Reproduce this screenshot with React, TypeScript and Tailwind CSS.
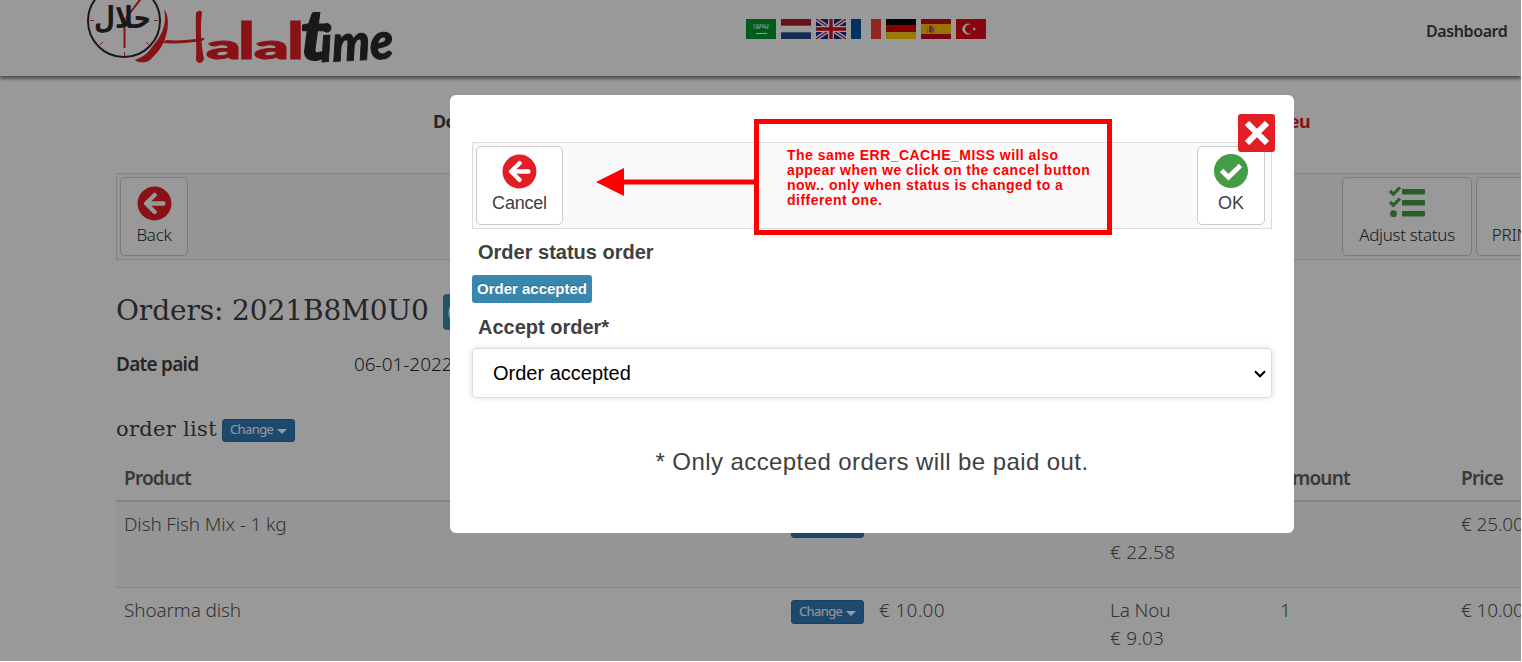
import type { ReactNode } from "react";
import { FaArrowCircleLeft } from "react-icons/fa";

interface OrderLine {
  product: string;
  unit: string;
  supplier: string;
  cost: string;
  amount: string;
  price: string;
}

const LINES: OrderLine[] = [
  { product: "Dish Fish Mix - 1 kg", unit: "€ 25.00", supplier: "La Nou", cost: "€ 22.58", amount: "1", price: "€ 25.00" },
  { product: "Shoarma dish", unit: "€ 10.00", supplier: "La Nou", cost: "€ 9.03", amount: "1", price: "€ 10.00" },
];

const COLUMNS = "grid grid-cols-[667px_88px_231px_170px_181px_150px]";

function Logo() {
  return (
    <svg className="block h-[76px] w-[320px]" viewBox="80 0 320 76">
      <circle cx="124" cy="21" r="36" fill="none" stroke="#2b2b2b" strokeWidth="2" />
      <g stroke="#e31e24" strokeWidth="1">
        <path d="M90 20.500h4M154 20.500h4M124.500 52v4M100 45l3-3M149 45l-3-3" />
        <path d="M124.500 18v30" strokeWidth="2" />
        <path d="M126 18L143-4" strokeWidth="2" />
      </g>
      <text x="94" y="28" fontSize="30" fontWeight="700" textLength="57" lengthAdjust="spacingAndGlyphs" fill="#2b2b2b" className="font-['DejaVu_Sans',sans-serif]">
        حلال
      </text>
      <g fill="#e31e24">
        {/* swashes that make up the oversized initial */}
        <path d="M164 10c5 3 5 19 1 29-2 7-8 14-13 19-3 4-9 6-16 3l-1-1c8-3 13-7 17-13 5-6 8-11 10-15 3-7 4-15 2-22z" />
        <path d="M166 40c11 1 23 0 38-2 1 0 0 2-2 3-13 2-29 3-39 2z" />
        <path d="M196 13c2-3 6-3 6 0-2 15-1 31 2 46-2 5-6 5-8 1 1-15-1-31 0-47z" />
        <g fontWeight="900" stroke="#e31e24" strokeWidth="1" className="font-[Lato,sans-serif]">
          <text x="206" y="59" fontSize="35" textLength="35" lengthAdjust="spacingAndGlyphs">a</text>
          <text x="238" y="59" fontSize="52" textLength="17" lengthAdjust="spacingAndGlyphs">l</text>
          <text x="254" y="59" fontSize="35" textLength="35" lengthAdjust="spacingAndGlyphs">a</text>
          <text x="287" y="59" fontSize="52" textLength="17" lengthAdjust="spacingAndGlyphs">l</text>
        </g>
      </g>
      <g fill="#2b2b2b" stroke="#2b2b2b" strokeWidth="1" fontWeight="900" fontStyle="italic" className="font-[Lato,sans-serif]">
        <text x="300" y="60" fontSize="70" textLength="28" lengthAdjust="spacingAndGlyphs">t</text>
        <text x="321" y="62" fontSize="51" textLength="73" lengthAdjust="spacingAndGlyphs" transform="rotate(-3 321 62)">ime</text>
      </g>
    </svg>
  );
}

function Flags() {
  return (
    <div className="flex gap-[5px]">
      <svg className="h-5 w-[30px]" viewBox="0 0 30 20">
        <path d="M0 0h30v20H0z" fill="#009b2f" />
        <path d="M8 5v3M10 5l1 4M12 5v4h2V5M15 5v3M17 5v4M19 5v4h3V5M8 9h6M16 8h6" stroke="#fff" strokeWidth="1" fill="none" opacity=".75" />
        <path d="M10 14.500h11" stroke="#fff" strokeWidth="1" />
      </svg>
      <svg className="h-5 w-[30px]" viewBox="0 0 30 20">
        <path d="M0 0h30v20H0z" fill="#fff" />
        <path d="M0 0h30v6.700H0z" fill="#ae1c28" />
        <path d="M0 13.300h30V20H0z" fill="#21468b" />
      </svg>
      <svg className="h-5 w-[30px]" viewBox="0 0 30 20">
        <path d="M0 0h30v20H0z" fill="#00349c" />
        <path d="M0 0l30 20M30 0L0 20" stroke="#fff" strokeWidth="4" />
        <path d="M0 0l30 20M30 0L0 20" stroke="#d80027" strokeWidth="1.300" />
        <path d="M15 0v20M0 10h30" stroke="#fff" strokeWidth="6" />
        <path d="M15 0v20M0 10h30" stroke="#d80c1a" strokeWidth="3.400" />
      </svg>
      <svg className="h-5 w-[30px]" viewBox="0 0 30 20">
        <path d="M0 0h30v20H0z" fill="#fff" />
        <path d="M0 0h10v20H0z" fill="#0055a4" />
        <path d="M20 0h10v20H20z" fill="#ef4135" />
      </svg>
      <svg className="h-5 w-[30px]" viewBox="0 0 30 20">
        <path d="M0 0h30v6.700H0z" fill="#000" />
        <path d="M0 6.700h30v6.600H0z" fill="#dd0000" />
        <path d="M0 13.300h30V20H0z" fill="#ffce00" />
      </svg>
      <svg className="h-5 w-[30px]" viewBox="0 0 30 20">
        <path d="M0 0h30v20H0z" fill="#c60b1e" />
        <path d="M0 5h30v10H0z" fill="#ffc400" />
        <path d="M6.500 8v6M13 8v6" stroke="#b98a55" strokeWidth="1" />
        <path d="M8 6.500h3.500V13L10 14l-2-1z" fill="#b5462e" />
        <path d="M10.500 9h2v4h-2z" fill="#8f7c80" />
      </svg>
      <svg className="h-5 w-[30px]" viewBox="0 0 30 20">
        <path d="M0 0h30v20H0z" fill="#e30a17" />
        <path d="M15 5.600a5.400 5.400 0 1 0 0 8.800 4.600 4.600 0 1 1 0-8.800z" fill="#fff" />
        <path d="M20.500 10l-4 1.300 2.400-3.400v4.200l-2.400-3.400z" fill="#fff" />
      </svg>
    </div>
  );
}

function CheckCircle() {
  return (
    <svg className="size-[34px]" viewBox="0 0 34 34">
      <circle cx="17" cy="17" r="17" fill="#449d44" />
      <path d="M7.500 16.500l7 6.700L26.500 11.500" fill="none" stroke="#fff" strokeWidth="4.800" />
    </svg>
  );
}

function TaskList() {
  return (
    <svg className="h-[34px] w-9" viewBox="0 0 36 34" fill="#449d44">
      <path d="M14 3h21q1 0 1 1v3.500q0 1-1 1H14q-1 0-1-1V4q0-1 1-1zM14 14h21q1 0 1 1v3.500q0 1-1 1H14q-1 0-1-1V15q0-1 1-1zM14 25h21q1 0 1 1v3.500q0 1-1 1H14q-1 0-1-1V26q0-1 1-1z" />
      <circle cx="4.500" cy="27.700" r="3.400" />
      <path d="M1 5l3.300 3.300L11 1.500M1 16l3.300 3.300L11 12.500" fill="none" stroke="#449d44" strokeWidth="3.200" />
    </svg>
  );
}

function ToolButton({ icon, label, className }: { icon: ReactNode; label: string; className: string }) {
  return (
    <button className={`flex h-[79px] shrink-0 flex-col items-center rounded-[5px] border border-[#ccc] bg-white pt-2 ${className}`}>
      <span className="flex h-[34px] items-center">{icon}</span>
      <span className="mt-[3px] whitespace-nowrap leading-6">{label}</span>
    </button>
  );
}

function ChangeButton({ className = "" }: { className?: string }) {
  return (
    <button className={`flex w-[73px] items-center rounded-[3px] border border-[#2e6da4] bg-[#337ab7] pb-0.5 pl-[7px] font-['Noto_Sans',sans-serif] text-[13px] font-normal tracking-[-0.6px] text-white ${className}`}>
      Change
      <span className="ml-[4px] mt-[4px] border-x-[5px] border-t-[5px] border-x-transparent border-t-white" />
    </button>
  );
}

function OrdersPage() {
  return (
    <div className="h-full w-full bg-white font-['Noto_Sans',sans-serif] text-[#404040]">
      <header className="relative flex h-[76px] items-start pl-20 shadow-[0_3px_3px_0_rgba(0,0,0,0.45)]">
        <Logo />
        <div className="ml-[346px] mt-[19px]">
          <Flags />
        </div>
        <span className="ml-[440px] mt-[19px] text-[16px] font-semibold leading-6 tracking-[-0.4px]">Dashboard</span>
      </header>

      <div className="ml-[433px] mt-8 flex h-[26px] w-[877px] items-center justify-between text-[18px] font-bold tracking-[-0.6px]">
        <span>Do</span>
        <span className="text-[#e31e24]">eu</span>
      </div>

      <div className="ml-[116px] mt-[39px] flex h-[87px] w-[1430px] border border-[#ddd] bg-[#fafafa] p-[3px] text-[17px] font-light tracking-[-0.3px] text-[#2b2b2b]">
        <ToolButton className="w-[68px]" icon={<FaArrowCircleLeft size={35} color="#e31e24" />} label="Back" />
        <ToolButton className="ml-[1154px] w-[130px]" icon={<TaskList />} label="Adjust status" />
        <ToolButton className="ml-1 w-[77px]" icon={null} label="PRINT" />
      </div>

      <div className="ml-[116px] mt-[34px] flex h-9 items-center">
        <h1 className="w-[327px] whitespace-nowrap pb-0.5 font-['DejaVu_Serif',serif] text-[28px] font-light tracking-[-0.1px]">Orders: 2021B8M0U0</h1>
        <span className="h-9 w-[120px] rounded bg-[#3a87ad] pl-1 text-[26px] font-bold leading-9 text-white">O</span>
      </div>

      <div className="ml-[116px] mt-5 flex h-7 items-center text-[19px]">
        <span className="w-[238px] font-semibold tracking-[-0.75px]">Date paid</span>
        <span className="font-light tracking-[-0.05px] text-[#2b2b2b]">06-01-2022</span>
      </div>

      <div className="ml-[116px] mt-[38px] flex h-7 items-center">
        <h2 className="w-[106px] whitespace-nowrap pb-px font-['DejaVu_Serif',serif] text-[21px] font-light tracking-[0.3px]">order list</h2>
        <ChangeButton className="mt-px h-[23px]" />
      </div>

      <div className="ml-[116px] mt-3 w-[1487px] text-[19px] leading-7 tracking-[-0.15px] text-[#555]">
        <div className={`${COLUMNS} h-[46px] border-b-2 border-[#ddd] pt-2 font-semibold tracking-[-0.8px] text-[#606060]`}>
          <span className="pl-2">Product</span>
          <span />
          <span />
          <span />
          <span className="pl-2">Amount</span>
          <span className="pl-2">Price</span>
        </div>
        {LINES.map((line, i) => (
          <div key={line.product} className={`${COLUMNS} h-[86px] border-b border-[#ddd] pt-2 font-light ${i % 2 === 0 ? "bg-[#f9f9f9]" : ""}`}>
            <span className="pl-2">{line.product}</span>
            <span className="pl-2 pt-1">
              <ChangeButton className="h-6" />
            </span>
            <span className="pl-2 tracking-[0.3px]">{line.unit}</span>
            <span className="pl-2">
              {line.supplier}
              <br />
              <span className="tracking-[0.2px]">{line.cost}</span>
            </span>
            <span className="pl-2">{line.amount}</span>
            <span className="pl-2">{line.price}</span>
          </div>
        ))}
      </div>
    </div>
  );
}

function StatusDialog() {
  return (
    <div className="absolute left-[450px] top-[95px] h-[438px] w-[844px] rounded-md bg-white px-[22px] pt-[47px] font-['Liberation_Sans',Arial,sans-serif] text-[#404040]">
      <div className="flex h-[87px] justify-between border border-[#ddd] bg-[#fafafa] py-[3px] pl-[3px] pr-[6px] text-[18px]">
        <ToolButton className="w-[87px] pt-[7px]! tracking-[-0.2px]" icon={<FaArrowCircleLeft size={35} color="#e31e24" />} label="Cancel" />
        <ToolButton className="w-[68px] pt-[7px]!" icon={<CheckCircle />} label="OK" />
      </div>
      <p className="ml-1.5 mt-[9px] text-[20px] font-bold leading-7">Order status order</p>
      <span className="mt-[9px] flex h-7 w-[120px] items-center justify-center whitespace-nowrap rounded-[3px] bg-[#3a87ad] text-[15px] font-bold text-white [text-shadow:0_-1px_0_rgba(0,0,0,0.25)]">
        Order accepted
      </span>
      <p className="ml-1.5 mt-[10px] text-[20px] font-bold leading-7">Accept order*</p>
      <div className="mt-[7px] flex h-[50px] items-center justify-between rounded-[5px] border border-[#ddd] bg-white pl-5 pr-[5px] text-[20px] text-black shadow-[0_0_6px_rgba(0,0,0,0.15)]">
        <span>Order accepted</span>
        <svg className="mt-px h-2 w-3" viewBox="0 0 12 8" fill="none" stroke="#000" strokeWidth="2">
          <path d="M1 1.300l5 5 5-5" />
        </svg>
      </div>
      <p className="mt-[46px] text-center text-[24px] leading-9 tracking-[0.42px]">* Only accepted orders will be paid out.</p>

      <button className="absolute left-[788px] top-[19px] flex h-[38px] w-[37px] items-center justify-center rounded-[3px] bg-[#e31e24]" aria-label="Close">
        <svg className="size-6" viewBox="0 0 24 24" stroke="#fff" strokeWidth="6">
          <path d="M2 2l20 20M22 2L2 22" />
        </svg>
      </button>
    </div>
  );
}

function Note() {
  return (
    <div className="absolute left-[596px] top-[119px] flex h-[116px] w-[516px] items-start">
      <svg className="mt-[49px] h-7 w-[158px] shrink-0" viewBox="0 0 158 28" fill="#f00">
        <path d="M0 14L28 0v28zM27 11.500h131v5H27z" />
      </svg>
      <p className="h-[116px] w-[358px] whitespace-nowrap border-[5px] border-[#f00] pl-7 pt-6 font-['Liberation_Sans',Arial,sans-serif] text-[14px] font-bold leading-[15px] tracking-[0.47px] text-[#f00]">
        The same ERR_CACHE_MISS will also
        <br />
        appear when we click on the cancel button
        <br />
        now.. only when status is changed to a
        <br />
        different one.
      </p>
    </div>
  );
}

export default function App() {
  return (
    <div className="h-[662px] w-[1522px] overflow-hidden bg-white">
      <div className="relative h-[661px] w-[1521px] overflow-hidden">
        <OrdersPage />
        <div className="absolute inset-0 bg-black/40" />
        <StatusDialog />
        <Note />
      </div>
    </div>
  );
}
